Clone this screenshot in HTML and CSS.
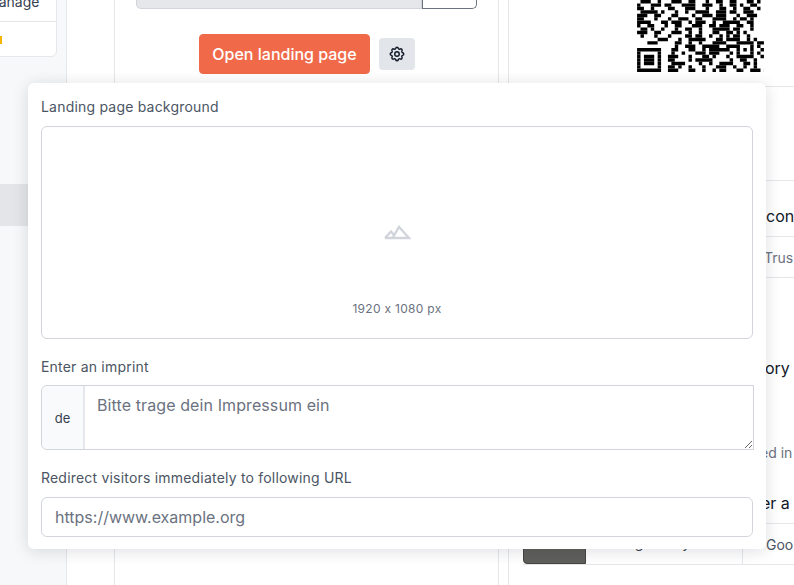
FILE: index.html
```html
<!DOCTYPE html>
<html lang="en">
<head>
<meta charset="utf-8">
<title>Landing page settings</title>
<link rel="stylesheet" href="styles.css">
</head>
<body>
<div class="page">
  <aside class="sidebar">
    <div class="side-card">
      <div class="side-row">Manage</div>
      <div class="side-row side-row-mark"><span class="mark"></span></div>
    </div>
    <div class="side-active"></div>
  </aside>
  <main class="main">
    <section class="card-left">
      <div class="url-group"><div class="url-field"></div><div class="url-copy"></div></div>
      <div class="actions">
        <button class="btn-primary" type="button">Open landing page</button>
        <button class="btn-gear" type="button" aria-label="Settings">
          <svg width="18" height="18" viewBox="0 0 24 24" fill="none" stroke="#111827" stroke-width="1.900" stroke-linecap="round" stroke-linejoin="round"><path d="M10.3 4.3c.4-1.800 3-1.800 3.400 0a1.700 1.700 0 0 0 2.600 1.100c1.500-.9 3.300.8 2.300 2.300a1.700 1.700 0 0 0 1.100 2.600c1.800.4 1.800 3 0 3.400a1.700 1.700 0 0 0-1.100 2.600c.9 1.500-.8 3.300-2.300 2.300a1.700 1.700 0 0 0-2.600 1.100c-.4 1.800-3 1.800-3.400 0a1.700 1.700 0 0 0-2.600-1.100c-1.500.9-3.300-.8-2.300-2.300a1.700 1.700 0 0 0-1.100-2.600c-1.800-.4-1.800-3 0-3.400a1.700 1.700 0 0 0 1.100-2.600c-.9-1.500.8-3.300 2.300-2.300a1.700 1.700 0 0 0 2.600-1.100z"/><circle cx="12" cy="12" r="3"/></svg>
        </button>
      </div>
    </section>
    <section class="card-right">
      <div class="qr-block">
        <svg class="qr" viewBox="0 0 37 21" width="127" height="72" fill="none" stroke="#000" stroke-width="1">
          <path d="M1 .5h3m2 0h1m3 0h3m2 0h2m3 0h1m2 0h2m2 0h2m3 0h2m1 0h1"/>
          <path d="M0 1.500h1m3 0h3m1 0h2m3 0h4m2 0h3m2 0h1m2 0h2m1 0h1m2 0h2"/>
          <path d="M0 2.500h2m2 0h1m4 0h2m3 0h3m3 0h1m3 0h2m2 0h1m2 0h2m2 0h1"/>
          <path d="M1 3.500h5m1 0h1m3 0h1m2 0h1m2 0h4m2 0h3m1 0h2m2 0h3"/>
          <path d="M0 4.500h3m2 0h2m3 0h2m4 0h1m2 0h3m1 0h3m3 0h1m2 0h3"/>
          <path d="M0 5.500h2m3 0h1m3 0h1m2 0h3m2 0h2m3 0h4m2 0h1m1 0h2m1 0h1"/>
          <path d="M0 6.500h4m3 0h2m1 0h3m2 0h1m1 0h3m2 0h1m2 0h5m2 0h2"/>
          <path d="M0 7.500h1m2 0h2m3 0h1m2 0h2m3 0h3m2 0h2m1 0h3m2 0h2m2 0h1"/>
          <path d="M1 8.500h2m1 0h1m2 0h1m3 0h1m2 0h2m2 0h1m3 0h5m1 0h2m3 0h1"/>
          <path d="M0 9.500h3m2 0h2m3 0h3m2 0h1m2 0h1m3 0h2m2 0h2m1 0h1m1 0h1"/>
          <path d="M1 10.500h1m3 0h1m3 0h1m4 0h2m1 0h2m2 0h1m2 0h1m1 0h1m1 0h2m2 0h1"/>
          <path d="M6 11.500h3m3 0h1m2 0h5m3 0h2m1 0h4m2 0h1m1 0h1"/>
          <path d="M3 12.500h3m5 0h2m2 0h1m2 0h1m3 0h4m3 0h5m1 0h2"/>
          <path d="M11 13.500h1m2 0h3m2 0h5m2 0h4m3 0h1m1 0h1"/>
          <path d="M0 14.500h7m3 0h2m3 0h2m2 0h1m1 0h6m2 0h1m1 0h1m1 0h1m2 0h1"/>
          <path d="M0 15.500h1m5 0h1m3 0h1m2 0h1m3 0h3m1 0h3m3 0h1m1 0h1m3 0h1m1 0h1"/>
          <path d="M0 16.500h1m1 0h3m1 0h1m2 0h3m3 0h1m3 0h2m1 0h1m3 0h1m2 0h5m2 0h1"/>
          <path d="M0 17.500h1m1 0h3m1 0h1m2 0h2m4 0h1m1 0h5m5 0h1m2 0h2m2 0h1"/>
          <path d="M0 18.500h1m1 0h3m1 0h1m3 0h4m4 0h1m2 0h1m2 0h4m3 0h2m1 0h1"/>
          <path d="M0 19.500h1m5 0h1m2 0h2m1 0h1m2 0h1m3 0h1m3 0h3m2 0h1m2 0h1m2 0h1"/>
          <path d="M0 20.500h7m2 0h3m3 0h2m2 0h1m2 0h1m1 0h2m3 0h2m2 0h3m1 0h1"/>
        </svg>
      </div>
      <div class="panel-gap"></div>
      <div class="panel-row row-title">con</div>
      <div class="panel-row row-sub">Trus</div>
      <div class="panel-text text-ory">ory</div>
      <div class="panel-text text-in">ed in</div>
      <div class="panel-row row-title row-era">er a</div>
      <div class="table-row">
        <div class="table-btn"></div>
        <div class="table-mid">Engine key</div>
        <div class="table-end">Goo</div>
      </div>
    </section>
  </main>
</div>

<div class="popover">
  <label class="field-label label-bg">Landing page background</label>
  <div class="dropzone">
    <svg class="mountain" width="28" height="15" viewBox="0 0 28 15" fill="none" stroke="#d1d5db" stroke-width="2.400"><path d="M2 13h24L16 2 9.500 13M2 13l6-6.500 2.500 3"/></svg>
    <span class="drop-size">1920 x 1080 px</span>
  </div>
  <label class="field-label label-imprint">Enter an imprint</label>
  <div class="imprint-group">
    <span class="lang">de</span>
    <textarea class="imprint-input" placeholder="Bitte trage dein Impressum ein"></textarea>
  </div>
  <label class="field-label label-url">Redirect visitors immediately to following URL</label>
  <input class="url-input" type="text" placeholder="https://www.example.org">
</div>
</body>
</html>
```

FILE: styles.css
```css
* { box-sizing: border-box; }
html, body { margin: 0; height: 100%; overflow: hidden; background: #fff; }
body { font-family: Inter, "Liberation Sans", sans-serif; color: #111827; font-variant-ligatures: no-contextual; }

.page { display: flex; height: 585px; overflow: hidden; }

.sidebar { width: 67px; flex: none; background: #f7f8f9; border-right: 1px solid #e5e7eb; overflow: hidden; }
.side-card { width: 77px; height: 67px; margin: -10px 0 0 -20px; background: #fff; border: 1px solid #e5e7eb; border-radius: 6px; }
.side-row { height: 31px; padding: 1px 0 0 5px; font-size: 14px; line-height: 20px; color: #374151; border-bottom: 1px solid #e5e7eb; }
.side-row-mark { border-bottom: 0; padding: 0; }
.mark { display: block; width: 21px; height: 8px; margin: 14px 0 0 0; background: #f5b50a; }
.side-active { height: 42px; margin-top: 127px; background: #e4e5e8; }

.main { flex: 1; display: flex; padding-left: 47px; min-width: 0; }

.card-left { width: 385px; flex: none; margin-top: -8px; border: 1px solid #e5e7eb; border-bottom: 0; padding: 0 21px; }
.url-group { display: flex; height: 16px; }
.url-field { flex: 1; background: #e5e7eb; border: 1px solid #d1d5db; border-top: 0; border-radius: 0 0 0 5px; }
.url-copy { width: 55px; background: #fff; border: 1px solid #6b7280; border-top: 0; border-radius: 0 0 5px 0; }
.actions { display: flex; justify-content: center; align-items: center; gap: 9px; margin-top: 25px; padding-left: 1px; }
.btn-primary { width: 171px; height: 40px; padding: 0; font: 500 16px/24px Inter, sans-serif; color: #fff; background: #f06a4a; border: 1px solid #ee6a48; border-radius: 4px; }
.btn-gear { width: 36px; height: 32px; padding: 0; display: flex; align-items: center; justify-content: center; background: #e2e6ea; border: 0; border-radius: 4px; }

.card-right { flex: 1; margin-left: 9px; border-left: 1px solid #e5e7eb; display: flex; flex-direction: column; min-width: 0; overflow: hidden; }
.qr-block { height: 87px; display: flex; align-items: flex-start; padding-left: 128px; border-bottom: 1px solid #e5e7eb; }
.qr { display: block; }
.panel-gap { height: 94px; border-bottom: 1px solid #e5e7eb; }
.panel-row, .panel-text { padding-left: 257px; white-space: nowrap; }
.row-title { font-size: 16px; line-height: 24px; color: #111827; }
.row-sub { font-size: 14px; line-height: 20px; color: #6b7280; height: 41px; padding-top: 11px; padding-left: 255px; border-bottom: 1px solid #e5e7eb; }
.panel-row.row-title:not(.row-era) { height: 56px; padding-top: 23px; border-bottom: 1px solid #e5e7eb; }
.text-ory { font-size: 16px; line-height: 24px; margin-top: 78px; padding-left: 256px; }
.text-in { font-size: 14px; line-height: 20px; color: #6b7280; margin-top: 63px; padding-left: 251px; }
.row-era { height: 32px; padding-top: 0; margin-top: 28px; padding-left: 252px; }
.table-row { display: flex; height: 42px; margin-left: 14px; border-top: 1px solid #e5e7eb; border-bottom: 1px solid #e5e7eb; }
.table-btn { width: 63px; margin-top: -1px; background: #5f605c; border: 1px solid #44453f; border-radius: 0 0 0 4px; }
.table-mid { width: 157px; padding-left: 32px; font-size: 14px; line-height: 20px; padding-top: 9px; color: #374151; border-right: 1px solid #e5e7eb; }
.table-end { padding-left: 23px; padding-top: 11px; font-size: 14px; line-height: 20px; color: #4b5563; }

.popover { position: absolute; left: 28px; top: 83px; width: 738px; height: 466px; padding: 14px 13px 0; background: #fff; border-radius: 6px; box-shadow: 0 2px 16px rgba(17, 24, 39, .14); }
.field-label { display: block; font-size: 14px; line-height: 20px; letter-spacing: .2px; color: #4b5563; }
.dropzone { display: flex; flex-direction: column; align-items: center; height: 213px; margin-top: 9px; padding-top: 98px; border: 1px solid #d1d5db; border-radius: 6px; }
.mountain { display: block; flex: none; }
.drop-size { margin-top: 61px; font-size: 12px; line-height: 16px; letter-spacing: .3px; color: #6b7280; }
.label-imprint { margin-top: 18px; }
.imprint-group { display: flex; width: 713px; height: 65px; margin-top: 8px; border: 1px solid #d1d5db; border-radius: 6px 0 0 6px; }
.lang { width: 43px; flex: none; display: flex; align-items: center; justify-content: center; font-size: 13px; color: #374151; background: #f9fafb; border-right: 2px solid #e5e7eb; border-radius: 6px 0 0 6px; }
.imprint-input { flex: 1; height: 100%; padding: 7px 12px; font: 16px/24px Inter, sans-serif; letter-spacing: .1px; border: 0; outline: 0; background: #fff; }
.imprint-input::placeholder, .url-input::placeholder { color: #6b7280; opacity: 1; }
.label-url { margin-top: 18px; }
.url-input { display: block; width: 712px; height: 40px; margin-top: 9px; padding: 0 13px; font: 16px/24px Inter, sans-serif; border: 1px solid #d1d5db; border-radius: 6px; outline: 0; background: #fff; }
```
